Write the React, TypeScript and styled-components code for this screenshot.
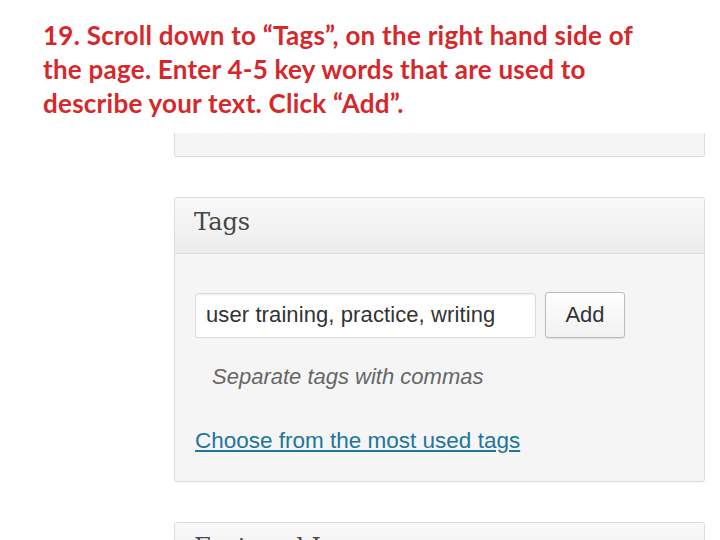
import React from 'react'
import styled, { createGlobalStyle } from 'styled-components'

const GlobalStyle = createGlobalStyle`
  html, body {
    margin: 0;
    padding: 0;
    background: #ffffff;
    overflow: hidden;
  }
`

const Slide = styled.div`
  width: 720px;
  height: 540px;
  overflow: hidden;
  display: flex;
  flex-direction: column;
  background: #ffffff;
`

const Instruction = styled.p`
  margin: 0;
  padding: 18px 0 0 43px;
  font-family: Lato, 'Open Sans', sans-serif;
  font-weight: 700;
  font-size: 26px;
  line-height: 34px;
  letter-spacing: 0.25px;
  color: #d6282b;
`

// the cropped wp-admin sidebar
const Sidebar = styled.div`
  margin: 13px 0 0 174px;
  width: 531px;
  display: flex;
  flex-direction: column;
  gap: 40px;
`

const Panel = styled.div<{ $cutTop?: boolean }>`
  box-sizing: border-box;
  border: 1px solid #dcdcdc;
  border-top: ${p => (p.$cutTop ? 'none' : '1px solid #dcdcdc')};
  border-radius: ${p => (p.$cutTop ? '0 0 3px 3px' : '3px')};
  background: #f5f5f5;
  box-shadow: 0 1px 1px rgba(0, 0, 0, 0.03);
  flex-shrink: 0;
`

const StubPanel = styled(Panel)`
  height: 24px;
`

const PanelHeader = styled.div`
  height: 56px;
  box-sizing: border-box;
  padding: 0 0 7px 19px;
  line-height: 49px;
  border-bottom: 1px solid #dfdfdf;
  border-radius: 3px 3px 0 0;
  background: linear-gradient(to bottom, #f9f9f9, #ececec);
  font-family: 'DejaVu Serif', Georgia, serif;
  font-size: 24px;
  color: #464646;
  white-space: nowrap;
`

const PanelBody = styled.div`
  padding: 38px 20px 27px 20px;
  display: flex;
  flex-direction: column;
  align-items: flex-start;
  font-family: 'Liberation Sans', Arial, sans-serif;
`

const TagRow = styled.div`
  display: flex;
  align-items: center;
  gap: 9px;
`

const TagInput = styled.div`
  box-sizing: border-box;
  width: 341px;
  height: 45px;
  padding: 0 10px;
  display: flex;
  align-items: center;
  background: #ffffff;
  border: 1px solid #dddddd;
  border-radius: 3px;
  box-shadow: inset 0 1px 2px rgba(0, 0, 0, 0.07);
  font-size: 22px;
  letter-spacing: 0.1px;
  color: #333333;
  white-space: nowrap;
`

const AddButton = styled.button`
  box-sizing: border-box;
  width: 80px;
  height: 46px;
  padding: 0;
  border: 1px solid #bbbbbb;
  border-radius: 3px;
  background: linear-gradient(to bottom, #fefefe, #f2f2f2);
  box-shadow: 0 1px 1px rgba(0, 0, 0, 0.08);
  font-family: 'Liberation Sans', Arial, sans-serif;
  font-size: 22px;
  color: #333333;
`

const Hint = styled.p`
  margin: 26px 0 0 17px;
  font-size: 22px;
  line-height: 26px;
  font-style: italic;
  color: #666666;
`

const MostUsedLink = styled.a`
  margin-top: 38px;
  font-size: 22.5px;
  line-height: 26px;
  color: #21759b;
  text-decoration: underline;
`

export default function App() {
  return (
    <>
      <GlobalStyle />
      <Slide>
        <Instruction>
          19. Scroll down to “Tags”, on the right hand side of
          <br />
          the page. Enter 4-5 key words that are used to
          <br />
          describe your text. Click “Add”.
        </Instruction>
        <Sidebar>
          <StubPanel $cutTop />
          <Panel>
            <PanelHeader>Tags</PanelHeader>
            <PanelBody>
              <TagRow>
                <TagInput>user training, practice, writing</TagInput>
                <AddButton>Add</AddButton>
              </TagRow>
              <Hint>Separate tags with commas</Hint>
              <MostUsedLink href="#">Choose from the most used tags</MostUsedLink>
            </PanelBody>
          </Panel>
          <Panel>
            <PanelHeader>Featured Image</PanelHeader>
          </Panel>
        </Sidebar>
      </Slide>
    </>
  )
}
